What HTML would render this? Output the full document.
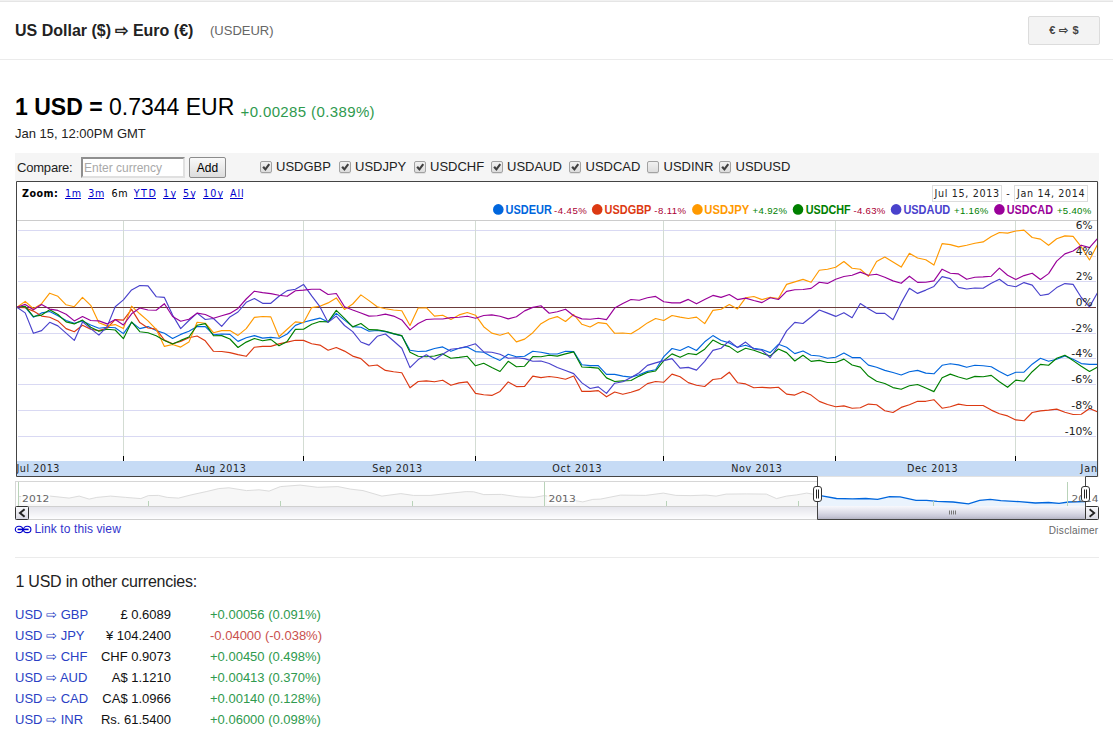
<!DOCTYPE html>
<html>
<head>
<meta charset="utf-8">
<title>US Dollar to Euro</title>
<style>
html,body{margin:0;padding:0;background:#fff;}
body{width:1113px;height:743px;position:relative;overflow:hidden;font-family:"Liberation Sans",Arial,sans-serif;color:#222;}
.abs{position:absolute;white-space:nowrap;}
#topline{left:0;top:0;width:1113px;height:1px;background:#f1f1f1;border-bottom:1px solid #e5e5e5;}
#hdrline{left:0;top:59px;width:1113px;height:1px;background:#ebebeb;}
#title{left:15px;top:22px;font-size:16px;font-weight:bold;line-height:18px;color:#222;}
#sym{left:210px;top:23px;font-size:13px;line-height:15px;color:#666;}
#swap{left:1028px;top:16px;width:70px;height:27px;border:1px solid #dcdcdc;background:#f3f3f3;border-radius:2px;text-align:center;font-size:11px;font-weight:bold;line-height:27px;color:#444;word-spacing:1px;}
#price{left:15px;top:94px;font-size:23px;line-height:26px;color:#000;}
#price b{font-weight:bold;}
#chg{left:240.5px;top:103px;font-size:15px;line-height:18px;color:#2f9a4e;letter-spacing:0.38px;}
#date{left:15px;top:126px;font-size:13px;line-height:15px;color:#222;}
#cmpbar{left:15px;top:153px;width:1084px;height:28px;background:#f5f5f5;}
#cmplbl{left:17px;top:160px;font-size:13px;line-height:15px;color:#222;letter-spacing:-0.2px;}
#cmpin{left:81px;top:157px;width:100px;height:17px;border:2px solid;border-color:#8f8f8f #e0e0e0 #e0e0e0 #8f8f8f;background:#fff;font-size:12px;line-height:18px;color:#a9a9a9;padding-left:1px;width:99px;}
#cmpadd{left:189px;top:157px;width:35px;height:19px;border:1px solid #8c8c8c;border-radius:2px;background:linear-gradient(#f9f9f9,#dddddd);font-size:12px;line-height:20.5px;text-align:center;color:#000;}
.cb{width:10px;height:10px;border:1px solid #a2a2a2;border-radius:2px;background:linear-gradient(#f1f1f1,#dddddd);top:161px;box-shadow:0 1px 0 rgba(0,0,0,0.08);}
.cb svg{position:absolute;left:0;top:0;}
.cbl{top:159px;font-size:13px;line-height:15px;color:#222;}
#chart{left:16px;top:181px;}
.lnk{color:#1a0dab;}
#linkview{left:34.5px;top:522px;font-size:12px;line-height:14px;color:#3333cc;letter-spacing:0.1px;}
#discl{right:14.5px;top:525px;font-size:10px;line-height:12px;color:#666;letter-spacing:0.3px;}
#sep2{left:15px;top:557px;width:1084px;height:1px;background:#ebebeb;}
#other{left:15.5px;top:573px;font-size:16px;line-height:18px;color:#222;letter-spacing:-0.24px;}
.row{font-size:13px;line-height:16px;}
.c1{left:15px;color:#2a3fc4;}
.c2{right:942px;color:#111;}
.c3{left:210px;}
.up{color:#2f9a4e;}
.dn{color:#c9504d;}
</style>
</head>
<body>
<div class="abs" id="topline"></div>
<div class="abs" id="title">US Dollar ($) &#8680; Euro (&euro;)</div>
<div class="abs" id="sym">(USDEUR)</div>
<div class="abs" id="swap">&euro; &#8680; $</div>
<div class="abs" id="hdrline"></div>

<div class="abs" id="price"><b>1 USD =</b> 0.7344 EUR</div>
<div class="abs" id="chg">+0.00285 (0.389%)</div>
<div class="abs" id="date">Jan 15, 12:00PM GMT</div>

<div class="abs" id="cmpbar"></div>
<div class="abs" id="cmplbl">Compare:</div>
<div class="abs" id="cmpin">Enter currency</div>
<div class="abs" id="cmpadd">Add</div>

<div class="abs cb" style="left:260px"><svg width="10" height="10" viewBox="0 0 10 10"><path d="M1.3 5.6 L3.0 4.1 L4.3 5.7 L7.4 1.4 L9.1 2.7 L4.5 9 Z" fill="#3f3f3f"/></svg></div><div class="abs cbl" style="left:276px">USDGBP</div>
<div class="abs cb" style="left:339px"><svg width="10" height="10" viewBox="0 0 10 10"><path d="M1.3 5.6 L3.0 4.1 L4.3 5.7 L7.4 1.4 L9.1 2.7 L4.5 9 Z" fill="#3f3f3f"/></svg></div><div class="abs cbl" style="left:355px">USDJPY</div>
<div class="abs cb" style="left:414px"><svg width="10" height="10" viewBox="0 0 10 10"><path d="M1.3 5.6 L3.0 4.1 L4.3 5.7 L7.4 1.4 L9.1 2.7 L4.5 9 Z" fill="#3f3f3f"/></svg></div><div class="abs cbl" style="left:430px">USDCHF</div>
<div class="abs cb" style="left:491px"><svg width="10" height="10" viewBox="0 0 10 10"><path d="M1.3 5.6 L3.0 4.1 L4.3 5.7 L7.4 1.4 L9.1 2.7 L4.5 9 Z" fill="#3f3f3f"/></svg></div><div class="abs cbl" style="left:507px">USDAUD</div>
<div class="abs cb" style="left:569px"><svg width="10" height="10" viewBox="0 0 10 10"><path d="M1.3 5.6 L3.0 4.1 L4.3 5.7 L7.4 1.4 L9.1 2.7 L4.5 9 Z" fill="#3f3f3f"/></svg></div><div class="abs cbl" style="left:585.5px">USDCAD</div>
<div class="abs cb" style="left:647px"></div><div class="abs cbl" style="left:663.5px">USDINR</div>
<div class="abs cb" style="left:719px"><svg width="10" height="10" viewBox="0 0 10 10"><path d="M1.3 5.6 L3.0 4.1 L4.3 5.7 L7.4 1.4 L9.1 2.7 L4.5 9 Z" fill="#3f3f3f"/></svg></div><div class="abs cbl" style="left:735.5px">USDUSD</div>

<svg class="abs" id="chart" width="1113" height="345" viewBox="0 180 1113 345" style="left:0;top:180px;">
<defs>
<clipPath id="plotclip"><rect x="17" y="182" width="1080" height="294"/></clipPath>
<linearGradient id="trk" x1="0" y1="0" x2="0" y2="1"><stop offset="0" stop-color="#e3e3ea"/><stop offset="1" stop-color="#fdfdfe"/></linearGradient>
<linearGradient id="thumb" x1="0" y1="0" x2="0" y2="1"><stop offset="0" stop-color="#f8f8fc"/><stop offset="0.5" stop-color="#dcdce8"/><stop offset="0.8" stop-color="#c8c8d8"/><stop offset="1" stop-color="#b4b4c4"/></linearGradient>
<linearGradient id="btn" x1="0" y1="0" x2="0" y2="1"><stop offset="0" stop-color="#fafafc"/><stop offset="1" stop-color="#d8d8e2"/></linearGradient>
</defs>
<rect x="16" y="181" width="1082" height="296" fill="#fff"/>
<rect x="17" y="220" width="1080" height="1" fill="#cccccc"/>
<line x1="18" x2="1096" y1="230.5" y2="230.5" stroke="#d9d9f3" stroke-width="1"/>
<line x1="18" x2="1096" y1="256.5" y2="256.5" stroke="#d9d9f3" stroke-width="1"/>
<line x1="18" x2="1096" y1="281.5" y2="281.5" stroke="#d9d9f3" stroke-width="1"/>
<line x1="18" x2="1096" y1="333.5" y2="333.5" stroke="#d9d9f3" stroke-width="1"/>
<line x1="18" x2="1096" y1="358.5" y2="358.5" stroke="#d9d9f3" stroke-width="1"/>
<line x1="18" x2="1096" y1="384.5" y2="384.5" stroke="#d9d9f3" stroke-width="1"/>
<line x1="18" x2="1096" y1="410.5" y2="410.5" stroke="#d9d9f3" stroke-width="1"/>
<line x1="18" x2="1096" y1="436.5" y2="436.5" stroke="#d9d9f3" stroke-width="1"/>
<line x1="123.5" x2="123.5" y1="221" y2="456" stroke="#d3dcd3" stroke-width="1"/>
<line x1="123.5" x2="123.5" y1="456" y2="461" stroke="#000" stroke-width="1"/>
<line x1="303.5" x2="303.5" y1="221" y2="456" stroke="#d3dcd3" stroke-width="1"/>
<line x1="303.5" x2="303.5" y1="456" y2="461" stroke="#000" stroke-width="1"/>
<line x1="475.5" x2="475.5" y1="221" y2="456" stroke="#d3dcd3" stroke-width="1"/>
<line x1="475.5" x2="475.5" y1="456" y2="461" stroke="#000" stroke-width="1"/>
<line x1="663.5" x2="663.5" y1="221" y2="456" stroke="#d3dcd3" stroke-width="1"/>
<line x1="663.5" x2="663.5" y1="456" y2="461" stroke="#000" stroke-width="1"/>
<line x1="835.5" x2="835.5" y1="221" y2="456" stroke="#d3dcd3" stroke-width="1"/>
<line x1="835.5" x2="835.5" y1="456" y2="461" stroke="#000" stroke-width="1"/>
<line x1="1015.5" x2="1015.5" y1="221" y2="456" stroke="#d3dcd3" stroke-width="1"/>
<line x1="1015.5" x2="1015.5" y1="456" y2="461" stroke="#000" stroke-width="1"/>
<line x1="17" x2="1096" y1="307.5" y2="307.5" stroke="#6b3b3b" stroke-width="1.1"/>
<rect x="17" y="461" width="1080" height="15" fill="#c6dbf5"/>
<g clip-path="url(#plotclip)" fill="none" stroke-width="1.15" stroke-linejoin="round">
<polyline points="17.0,307.3 25.2,307.1 33.4,317.2 41.6,312.9 49.7,311.5 57.9,315.8 66.1,320.5 74.3,323.2 82.5,320.9 90.7,325.0 98.9,328.2 107.1,327.3 115.2,327.7 123.4,333.6 131.6,322.3 139.8,328.6 148.0,326.6 156.2,330.6 164.4,333.3 172.6,338.5 180.7,334.4 188.9,331.3 197.1,326.6 205.3,326.6 213.5,334.7 221.7,334.0 229.9,334.4 238.0,341.4 246.2,337.8 254.4,335.6 262.6,338.1 270.8,337.4 279.0,338.3 287.2,334.0 295.4,325.4 303.5,322.2 311.7,320.1 319.9,318.1 328.1,321.9 336.3,313.4 344.5,320.1 352.7,326.6 360.9,327.3 369.0,331.2 377.2,330.5 385.4,331.6 393.6,333.9 401.8,335.9 410.0,350.2 418.2,351.5 426.3,351.1 434.5,348.5 442.7,346.9 450.9,351.3 459.1,348.2 467.3,346.9 475.5,351.6 483.7,352.3 491.8,356.7 500.0,360.4 508.2,354.3 516.4,356.7 524.6,356.3 532.8,351.3 541.0,352.3 549.2,353.9 557.3,354.0 565.5,351.3 573.7,351.6 581.9,364.7 590.1,365.6 598.3,365.6 606.5,374.4 614.7,374.4 622.8,376.1 631.0,377.1 639.2,374.8 647.4,371.4 655.6,369.8 663.8,356.6 672.0,348.5 680.1,350.5 688.3,346.5 696.5,350.5 704.7,341.8 712.9,335.6 721.1,340.5 729.3,342.9 737.5,347.2 745.6,345.2 753.8,348.2 762.0,349.5 770.2,352.6 778.4,344.3 786.6,347.2 794.8,353.6 803.0,351.0 811.1,355.3 819.3,356.0 827.5,358.3 835.7,357.3 843.9,353.0 852.1,357.6 860.3,357.6 868.4,365.1 876.6,367.3 884.8,370.4 893.0,372.5 901.2,375.0 909.4,371.7 917.6,370.4 925.8,373.1 933.9,373.8 942.1,365.3 950.3,363.7 958.5,364.9 966.7,367.3 974.9,365.3 983.1,365.7 991.3,366.7 999.4,371.4 1007.6,375.8 1015.8,372.3 1024.0,372.1 1032.2,364.2 1040.4,358.3 1048.6,361.3 1056.7,359.3 1064.9,355.9 1073.1,359.3 1081.3,363.6 1089.5,364.4 1097.7,364.4" stroke="#0066dd"/>
<polyline points="17.0,307.3 25.2,307.7 33.4,311.1 41.6,316.1 49.7,317.2 57.9,320.9 66.1,328.6 74.3,331.7 82.5,325.3 90.7,329.3 98.9,330.6 107.1,328.0 115.2,319.6 123.4,320.1 131.6,309.4 139.8,322.6 148.0,328.0 156.2,329.1 164.4,340.1 172.6,343.7 180.7,341.4 188.9,337.8 197.1,336.0 205.3,340.8 213.5,351.3 221.7,351.5 229.9,352.6 238.0,354.6 246.2,356.3 254.4,347.2 262.6,346.4 270.8,346.4 279.0,343.9 287.2,342.1 295.4,340.2 303.5,340.4 311.7,343.7 319.9,345.1 328.1,350.2 336.3,347.5 344.5,351.1 352.7,356.1 360.9,358.6 369.0,366.0 377.2,365.0 385.4,370.4 393.6,371.8 401.8,372.7 410.0,387.8 418.2,381.5 426.3,380.9 434.5,381.8 442.7,380.2 450.9,385.3 459.1,382.9 467.3,381.9 475.5,393.4 483.7,394.7 491.8,395.4 500.0,391.4 508.2,381.9 516.4,386.6 524.6,386.4 532.8,376.1 541.0,377.6 549.2,376.5 557.3,377.5 565.5,379.2 573.7,376.0 581.9,391.4 590.1,391.4 598.3,390.6 606.5,396.8 614.7,392.0 622.8,394.3 631.0,392.3 639.2,389.6 647.4,383.6 655.6,381.5 663.8,382.2 672.0,374.1 680.1,376.8 688.3,382.6 696.5,385.2 704.7,386.5 712.9,379.5 721.1,378.5 729.3,372.2 737.5,382.7 745.6,383.9 753.8,387.7 762.0,387.3 770.2,387.9 778.4,387.3 786.6,394.1 794.8,395.1 803.0,391.4 811.1,395.1 819.3,401.4 827.5,404.5 835.7,406.8 843.9,405.9 852.1,408.3 860.3,407.8 868.4,404.1 876.6,404.8 884.8,410.7 893.0,412.5 901.2,407.4 909.4,404.7 917.6,401.3 925.8,401.3 933.9,399.7 942.1,408.2 950.3,406.7 958.5,404.1 966.7,405.5 974.9,405.5 983.1,405.5 991.3,410.1 999.4,413.7 1007.6,415.9 1015.8,419.9 1024.0,420.8 1032.2,412.5 1040.4,410.9 1048.6,410.1 1056.7,409.1 1064.9,412.2 1073.1,414.5 1081.3,414.2 1089.5,408.5 1097.7,411.8" stroke="#dc3912"/>
<polyline points="17.0,307.3 25.2,301.4 33.4,308.8 41.6,303.7 49.7,293.2 57.9,296.3 66.1,304.8 74.3,306.7 82.5,297.4 90.7,305.3 98.9,322.8 107.1,325.9 115.2,324.6 123.4,328.6 131.6,306.1 139.8,313.8 148.0,320.9 156.2,329.3 164.4,346.4 172.6,344.5 180.7,347.1 188.9,342.1 197.1,322.3 205.3,323.2 213.5,332.7 221.7,330.6 229.9,330.6 238.0,335.4 246.2,328.6 254.4,317.4 262.6,316.5 270.8,316.9 279.0,336.7 287.2,329.3 295.4,321.9 303.5,322.8 311.7,307.6 319.9,306.3 328.1,302.9 336.3,297.9 344.5,309.4 352.7,304.0 360.9,294.9 369.0,300.6 377.2,306.7 385.4,308.7 393.6,310.0 401.8,310.7 410.0,325.5 418.2,308.0 426.3,307.7 434.5,316.1 442.7,315.2 450.9,319.5 459.1,314.9 467.3,312.5 475.5,315.2 483.7,326.7 491.8,333.1 500.0,335.2 508.2,332.7 516.4,341.9 524.6,339.1 532.8,332.7 541.0,323.7 549.2,319.0 557.3,316.6 565.5,321.5 573.7,314.5 581.9,324.3 590.1,327.0 598.3,322.6 606.5,323.6 614.7,333.3 622.8,333.0 631.0,333.7 639.2,328.7 647.4,322.9 655.6,318.5 663.8,320.5 672.0,315.5 680.1,317.1 688.3,318.5 696.5,317.1 704.7,323.6 712.9,310.4 721.1,309.3 729.3,304.6 737.5,308.9 745.6,297.8 753.8,296.5 762.0,299.6 770.2,297.2 778.4,298.5 786.6,284.4 794.8,281.9 803.0,279.4 811.1,282.3 819.3,270.2 827.5,269.3 835.7,267.3 843.9,261.5 852.1,268.3 860.3,269.2 868.4,276.3 876.6,261.5 884.8,257.0 893.0,262.0 901.2,267.1 909.4,253.3 917.6,258.0 925.8,259.7 933.9,265.1 942.1,243.6 950.3,244.6 958.5,246.9 966.7,245.2 974.9,243.3 983.1,241.9 991.3,236.6 999.4,232.5 1007.6,233.1 1015.8,231.0 1024.0,230.1 1032.2,237.5 1040.4,239.1 1048.6,245.3 1056.7,238.8 1064.9,235.9 1073.1,236.4 1081.3,246.9 1089.5,260.0 1097.7,244.2" stroke="#ff9900"/>
<polyline points="17.0,307.3 25.2,306.4 33.4,316.5 41.6,315.1 49.7,309.8 57.9,314.5 66.1,321.9 74.3,323.9 82.5,320.1 90.7,327.3 98.9,331.3 107.1,329.3 115.2,330.0 123.4,338.7 131.6,321.9 139.8,331.7 148.0,332.7 156.2,335.8 164.4,340.4 172.6,344.1 180.7,340.4 188.9,337.0 197.1,325.3 205.3,323.6 213.5,335.8 221.7,335.6 229.9,339.0 238.0,347.5 246.2,342.1 254.4,338.5 262.6,340.8 270.8,339.4 279.0,345.7 287.2,341.4 295.4,329.4 303.5,329.3 311.7,324.2 319.9,321.5 328.1,321.9 336.3,310.3 344.5,318.4 352.7,326.9 360.9,323.5 369.0,329.6 377.2,329.9 385.4,331.3 393.6,333.6 401.8,335.6 410.0,352.2 418.2,356.3 426.3,356.8 434.5,356.0 442.7,353.9 450.9,358.3 459.1,357.4 467.3,356.3 475.5,365.8 483.7,363.3 491.8,367.5 500.0,371.5 508.2,361.3 516.4,366.8 524.6,366.2 532.8,356.6 541.0,356.7 549.2,355.2 557.3,356.1 565.5,353.9 573.7,351.9 581.9,367.0 590.1,367.4 598.3,368.1 606.5,377.9 614.7,381.5 622.8,380.9 631.0,380.5 639.2,376.1 647.4,372.5 655.6,371.0 663.8,360.6 672.0,353.9 680.1,357.3 688.3,353.5 696.5,354.6 704.7,349.2 712.9,340.1 721.1,344.3 729.3,346.6 737.5,352.4 745.6,348.3 753.8,350.2 762.0,353.3 770.2,356.0 778.4,349.0 786.6,352.6 794.8,361.0 803.0,355.3 811.1,361.4 819.3,360.4 827.5,362.5 835.7,362.5 843.9,359.1 852.1,365.0 860.3,367.1 868.4,376.1 876.6,381.2 884.8,383.5 893.0,387.6 901.2,389.3 909.4,385.8 917.6,384.5 925.8,388.0 933.9,391.6 942.1,377.7 950.3,374.1 958.5,377.0 966.7,379.2 974.9,376.4 983.1,376.8 991.3,375.4 999.4,381.8 1007.6,387.3 1015.8,380.1 1024.0,381.2 1032.2,371.7 1040.4,364.4 1048.6,365.3 1056.7,358.3 1064.9,355.2 1073.1,360.6 1081.3,366.3 1089.5,371.4 1097.7,366.9" stroke="#008000"/>
<polyline points="17.0,307.3 25.2,312.9 33.4,333.3 41.6,330.6 49.7,322.3 57.9,325.9 66.1,333.1 74.3,340.4 82.5,321.9 90.7,328.6 98.9,335.1 107.1,326.6 115.2,306.7 123.4,299.9 131.6,289.9 139.8,285.5 148.0,285.9 156.2,296.7 164.4,297.4 172.6,315.1 180.7,328.6 188.9,320.5 197.1,313.1 205.3,319.5 213.5,318.5 221.7,326.3 229.9,316.9 238.0,312.0 246.2,302.3 254.4,298.6 262.6,303.3 270.8,303.3 279.0,296.3 287.2,290.6 295.4,289.2 303.5,284.4 311.7,295.9 319.9,306.7 328.1,322.4 336.3,316.1 344.5,325.5 352.7,331.6 360.9,342.0 369.0,345.1 377.2,336.3 385.4,334.0 393.6,341.0 401.8,348.2 410.0,367.6 418.2,359.6 426.3,354.8 434.5,359.7 442.7,354.3 450.9,349.3 459.1,348.2 467.3,346.2 475.5,343.8 483.7,351.9 491.8,352.3 500.0,354.3 508.2,358.3 516.4,357.7 524.6,358.6 532.8,361.3 541.0,361.0 549.2,363.5 557.3,367.5 565.5,370.5 573.7,373.6 581.9,382.9 590.1,388.5 598.3,386.9 606.5,393.4 614.7,383.2 622.8,381.8 631.0,377.5 639.2,372.8 647.4,365.4 655.6,362.9 663.8,360.6 672.0,358.6 680.1,368.1 688.3,367.4 696.5,370.1 704.7,361.3 712.9,350.4 721.1,348.3 729.3,340.9 737.5,347.6 745.6,342.1 753.8,349.0 762.0,350.3 770.2,357.7 778.4,345.2 786.6,330.9 794.8,322.4 803.0,323.5 811.1,317.0 819.3,310.0 827.5,313.1 835.7,316.4 843.9,312.7 852.1,317.7 860.3,303.5 868.4,308.7 876.6,313.4 884.8,313.4 893.0,319.7 901.2,302.9 909.4,288.3 917.6,293.4 925.8,290.1 933.9,286.4 942.1,276.6 950.3,278.6 958.5,287.4 966.7,289.0 974.9,288.0 983.1,288.3 991.3,283.3 999.4,279.3 1007.6,285.3 1015.8,286.7 1024.0,282.6 1032.2,285.1 1040.4,295.5 1048.6,294.1 1056.7,287.6 1064.9,283.6 1073.1,284.4 1081.3,297.5 1089.5,306.9 1097.7,292.4" stroke="#4942cc"/>
<polyline points="17.0,307.3 25.2,304.4 33.4,309.8 41.6,304.4 49.7,309.1 57.9,310.4 66.1,314.2 74.3,320.9 82.5,316.5 90.7,320.5 98.9,320.9 107.1,323.9 115.2,319.6 123.4,325.0 131.6,313.8 139.8,308.0 148.0,310.0 156.2,310.2 164.4,303.7 172.6,316.5 180.7,321.2 188.9,319.2 197.1,313.1 205.3,314.5 213.5,318.2 221.7,315.8 229.9,313.4 238.0,308.4 246.2,299.0 254.4,291.2 262.6,292.6 270.8,293.6 279.0,295.3 287.2,296.3 295.4,290.7 303.5,290.1 311.7,289.2 319.9,289.2 328.1,294.5 336.3,293.5 344.5,306.7 352.7,310.0 360.9,313.0 369.0,316.1 377.2,315.7 385.4,314.1 393.6,316.1 401.8,319.9 410.0,329.9 418.2,323.5 426.3,319.5 434.5,319.0 442.7,319.0 450.9,317.6 459.1,317.2 467.3,316.3 475.5,318.3 483.7,315.5 491.8,314.9 500.0,316.2 508.2,318.9 516.4,316.8 524.6,310.9 532.8,307.4 541.0,305.8 549.2,313.2 557.3,311.8 565.5,309.2 573.7,315.7 581.9,318.9 590.1,319.3 598.3,318.2 606.5,319.6 614.7,308.1 622.8,303.4 631.0,299.5 639.2,300.2 647.4,297.7 655.6,296.4 663.8,301.8 672.0,302.9 680.1,302.9 688.3,299.4 696.5,303.8 704.7,299.5 712.9,295.4 721.1,297.4 729.3,294.5 737.5,299.6 745.6,298.1 753.8,300.5 762.0,302.6 770.2,297.8 778.4,299.5 786.6,291.4 794.8,289.8 803.0,289.5 811.1,288.4 819.3,282.3 827.5,283.4 835.7,279.2 843.9,276.5 852.1,275.2 860.3,272.1 868.4,275.2 876.6,274.2 884.8,277.3 893.0,280.9 901.2,283.3 909.4,276.2 917.6,282.4 925.8,282.2 933.9,280.9 942.1,269.2 950.3,273.2 958.5,273.9 966.7,279.3 974.9,277.3 983.1,276.9 991.3,276.2 999.4,268.1 1007.6,275.2 1015.8,279.5 1024.0,275.6 1032.2,273.2 1040.4,279.5 1048.6,273.6 1056.7,261.1 1064.9,253.9 1073.1,251.0 1081.3,245.2 1089.5,247.6 1097.7,238.2" stroke="#990099"/>
</g>
<g font-family="'DejaVu Sans',Verdana,sans-serif" font-size="9.6" fill="#222" text-anchor="end">
<text x="1092.6" y="229.0" textLength="16.8" lengthAdjust="spacingAndGlyphs">6%</text>
<text x="1092.6" y="255.0" textLength="16.8" lengthAdjust="spacingAndGlyphs">4%</text>
<text x="1092.6" y="280.0" textLength="16.8" lengthAdjust="spacingAndGlyphs">2%</text>
<text x="1092.6" y="306.0" textLength="16.8" lengthAdjust="spacingAndGlyphs">0%</text>
<text x="1092.6" y="332.0" textLength="21.4" lengthAdjust="spacingAndGlyphs">-2%</text>
<text x="1092.6" y="357.0" textLength="21.4" lengthAdjust="spacingAndGlyphs">-4%</text>
<text x="1092.6" y="383.0" textLength="21.4" lengthAdjust="spacingAndGlyphs">-6%</text>
<text x="1092.6" y="409.0" textLength="21.4" lengthAdjust="spacingAndGlyphs">-8%</text>
<text x="1092.6" y="435.0" textLength="27.8" lengthAdjust="spacingAndGlyphs">-10%</text>
</g>
<g clip-path="url(#plotclip)" font-family="'DejaVu Sans',Verdana,sans-serif" font-size="9.6" fill="#222">
<text x="16.4" y="472" textLength="43.0" lengthAdjust="spacing">Jul 2013</text>
<text x="195.2" y="472" textLength="50.6" lengthAdjust="spacing">Aug 2013</text>
<text x="372.3" y="472" textLength="49.8" lengthAdjust="spacing">Sep 2013</text>
<text x="552.3" y="472" textLength="49.3" lengthAdjust="spacing">Oct 2013</text>
<text x="731.3" y="472" textLength="50.6" lengthAdjust="spacing">Nov 2013</text>
<text x="907.0" y="472" textLength="50.6" lengthAdjust="spacing">Dec 2013</text>
<text x="1080.6" y="472" textLength="48.0" lengthAdjust="spacing">Jan 2014</text>
</g>
<g font-family="'DejaVu Sans',Verdana,sans-serif" font-size="9.6">
<text x="22" y="196.5" font-weight="bold" fill="#000" textLength="35.8" lengthAdjust="spacing">Zoom:</text>
<text x="65.0" y="196.5" fill="#0000cc" textLength="16.1" lengthAdjust="spacing">1m</text>
<rect x="65.0" y="198" width="16.0" height="1" fill="#0000cc"/>
<text x="88.2" y="196.5" fill="#0000cc" textLength="16.1" lengthAdjust="spacing">3m</text>
<rect x="88.0" y="198" width="16.0" height="1" fill="#0000cc"/>
<text x="111.6" y="196.5" fill="#000" textLength="16.1" lengthAdjust="spacing">6m</text>
<text x="133.7" y="196.5" fill="#0000cc" textLength="22.2" lengthAdjust="spacing">YTD</text>
<rect x="134.0" y="198" width="22.0" height="1" fill="#0000cc"/>
<text x="163.0" y="196.5" fill="#0000cc" textLength="13.3" lengthAdjust="spacing">1y</text>
<rect x="163.0" y="198" width="13.0" height="1" fill="#0000cc"/>
<text x="183.0" y="196.5" fill="#0000cc" textLength="13.0" lengthAdjust="spacing">5y</text>
<rect x="183.0" y="198" width="12.0" height="1" fill="#0000cc"/>
<text x="203.0" y="196.5" fill="#0000cc" textLength="20.2" lengthAdjust="spacing">10y</text>
<rect x="203.0" y="198" width="20.0" height="1" fill="#0000cc"/>
<text x="230.0" y="196.5" fill="#0000cc" textLength="13.6" lengthAdjust="spacing">All</text>
<rect x="230.0" y="198" width="13.0" height="1" fill="#0000cc"/>
</g>
<rect x="932.5" y="185.5" width="69" height="16" fill="#fff" stroke="#dddddd"/>
<rect x="1014.5" y="185.5" width="73" height="16" fill="#fff" stroke="#dddddd"/>
<g font-family="'DejaVu Sans',Verdana,sans-serif" font-size="9.6" fill="#222">
<text x="934.5" y="197" textLength="64.5" lengthAdjust="spacing">Jul 15, 2013</text><text x="1006.3" y="197">-</text><text x="1017" y="197" textLength="67.6" lengthAdjust="spacing">Jan 14, 2014</text>
</g>
<g font-family="'Liberation Sans',Arial,sans-serif">
<circle cx="498.3" cy="209.4" r="5.3" fill="#0066dd"/>
<text x="505.5" y="214" font-size="12" font-weight="bold" fill="#0066dd" textLength="46.3" lengthAdjust="spacingAndGlyphs">USDEUR</text>
<text x="554.1" y="214" font-size="9.6" fill="#aa0033" textLength="32.6" lengthAdjust="spacing">-4.45%</text>
<circle cx="597.2" cy="209.4" r="5.3" fill="#dc3912"/>
<text x="604.6" y="214" font-size="12" font-weight="bold" fill="#dc3912" textLength="46.8" lengthAdjust="spacingAndGlyphs">USDGBP</text>
<text x="654.3" y="214" font-size="9.6" fill="#aa0033" textLength="31.8" lengthAdjust="spacing">-8.11%</text>
<circle cx="697.4" cy="209.4" r="5.3" fill="#ff9900"/>
<text x="704.3" y="214" font-size="12" font-weight="bold" fill="#ff9900" textLength="45.0" lengthAdjust="spacingAndGlyphs">USDJPY</text>
<text x="752.6" y="214" font-size="9.6" fill="#008000" textLength="34.4" lengthAdjust="spacing">+4.92%</text>
<circle cx="798.0" cy="209.4" r="5.3" fill="#008000"/>
<text x="805.7" y="214" font-size="12" font-weight="bold" fill="#008000" textLength="45.0" lengthAdjust="spacingAndGlyphs">USDCHF</text>
<text x="853.4" y="214" font-size="9.6" fill="#aa0033" textLength="31.9" lengthAdjust="spacing">-4.63%</text>
<circle cx="896.1" cy="209.4" r="5.3" fill="#4942cc"/>
<text x="903.4" y="214" font-size="12" font-weight="bold" fill="#4942cc" textLength="46.9" lengthAdjust="spacingAndGlyphs">USDAUD</text>
<text x="954.0" y="214" font-size="9.6" fill="#008000" textLength="34.3" lengthAdjust="spacing">+1.16%</text>
<circle cx="999.4" cy="209.4" r="5.3" fill="#990099"/>
<text x="1006.7" y="214" font-size="12" font-weight="bold" fill="#990099" textLength="46.3" lengthAdjust="spacingAndGlyphs">USDCAD</text>
<text x="1056.9" y="214" font-size="9.6" fill="#008000" textLength="34.4" lengthAdjust="spacing">+5.40%</text>
</g>
<rect x="15.5" y="481.5" width="802" height="38" fill="#fff" stroke="#d6d6d6"/>
<polygon points="17,506 18.8,496.5 50.3,496.1 69.1,498.1 79.2,496.1 89.2,499.1 96.8,497.4 110.6,496.1 125.7,497.4 140.8,498.6 148.4,495.6 158.4,495.4 167.2,497.4 178.6,498.1 191.1,494.9 206.2,491.6 218.8,488.6 228.9,487.8 246.5,490.6 259.1,489.8 269.1,491.1 280.4,486.6 300.1,485.1 317.7,487.3 337.9,486.6 350.4,489.1 363.0,490.6 381.9,496.1 400.8,493.6 413.3,495.4 430.9,495.4 451.1,493.1 466.2,491.6 473.7,491.8 483.8,494.6 501.4,494.4 519.0,496.9 534.1,497.4 544.2,495.6 560.0,498.0 575.2,500.7 582.8,501.9 592.8,499.4 600.4,499.1 620.5,495.1 645.7,495.4 663.3,493.1 675.8,495.4 690.9,495.6 706.0,495.1 716.1,496.1 726.2,494.1 746.3,493.9 766.4,494.1 776.5,498.6 786.5,496.1 796.6,494.9 806.7,493.1 817.0,494.8 817,506" fill="#f7f7f7"/>
<polyline points="18.8,496.5 50.3,496.1 69.1,498.1 79.2,496.1 89.2,499.1 96.8,497.4 110.6,496.1 125.7,497.4 140.8,498.6 148.4,495.6 158.4,495.4 167.2,497.4 178.6,498.1 191.1,494.9 206.2,491.6 218.8,488.6 228.9,487.8 246.5,490.6 259.1,489.8 269.1,491.1 280.4,486.6 300.1,485.1 317.7,487.3 337.9,486.6 350.4,489.1 363.0,490.6 381.9,496.1 400.8,493.6 413.3,495.4 430.9,495.4 451.1,493.1 466.2,491.6 473.7,491.8 483.8,494.6 501.4,494.4 519.0,496.9 534.1,497.4 544.2,495.6 560.0,498.0 575.2,500.7 582.8,501.9 592.8,499.4 600.4,499.1 620.5,495.1 645.7,495.4 663.3,493.1 675.8,495.4 690.9,495.6 706.0,495.1 716.1,496.1 726.2,494.1 746.3,493.9 766.4,494.1 776.5,498.6 786.5,496.1 796.6,494.9 806.7,493.1 817.0,494.8" fill="none" stroke="#dcdcdc" stroke-width="1"/>
<rect x="818" y="477" width="267" height="29" fill="#fff"/>
<rect x="818" y="476" width="267" height="1" fill="#e2e2e2"/>
<polygon points="818,506 818.0,495.2 821.9,495.9 836.5,498.5 852.4,498.8 865.7,498.5 877.6,499.3 889.5,496.7 900.1,496.9 916.0,500.4 926.6,500.4 937.2,501.4 953.1,502.0 968.5,503.8 979.6,500.4 990.2,499.3 1000.8,500.6 1019.4,501.7 1035.3,503.0 1048.5,502.5 1059.1,503.3 1068.4,502.0 1085.0,501.5 1085,506" fill="#eaf3fd"/>
<polyline points="818.0,495.2 821.9,495.9 836.5,498.5 852.4,498.8 865.7,498.5 877.6,499.3 889.5,496.7 900.1,496.9 916.0,500.4 926.6,500.4 937.2,501.4 953.1,502.0 968.5,503.8 979.6,500.4 990.2,499.3 1000.8,500.6 1019.4,501.7 1035.3,503.0 1048.5,502.5 1059.1,503.3 1068.4,502.0 1085.0,501.5" fill="none" stroke="#0066dd" stroke-width="1.3"/>
<line x1="18.5" x2="18.5" y1="482" y2="506" stroke="#b9d3b9" stroke-width="1"/>
<line x1="544.5" x2="544.5" y1="482" y2="506" stroke="#b9d3b9" stroke-width="1"/>
<line x1="1067.5" x2="1067.5" y1="482" y2="506" stroke="#b9d3b9" stroke-width="1"/>
<line x1="148.5" x2="148.5" y1="501" y2="506" stroke="#b9d3b9" stroke-width="1"/>
<line x1="280.5" x2="280.5" y1="501" y2="506" stroke="#b9d3b9" stroke-width="1"/>
<line x1="412.5" x2="412.5" y1="501" y2="506" stroke="#b9d3b9" stroke-width="1"/>
<line x1="666.5" x2="666.5" y1="501" y2="506" stroke="#b9d3b9" stroke-width="1"/>
<line x1="798.5" x2="798.5" y1="501" y2="506" stroke="#b9d3b9" stroke-width="1"/>
<line x1="933.5" x2="933.5" y1="501" y2="506" stroke="#b9d3b9" stroke-width="1"/>
<g font-family="'DejaVu Sans',Verdana,sans-serif" font-size="10" fill="#666">
<rect x="21" y="494" width="29" height="10" fill="#fff" opacity="0.7"/><rect x="547" y="494" width="29" height="10" fill="#fff" opacity="0.7"/>
<text transform="translate(22.1,502.3) scale(1.07,0.9)" x="0" y="0">2012</text>
<text transform="translate(548.5,502.3) scale(1.07,0.9)" x="0" y="0">2013</text>
<text transform="translate(1071.4,502.3) scale(1.07,0.9)" x="0" y="0">2014</text>
</g>
<rect x="17" y="506" width="1081" height="13" fill="url(#trk)"/>
<line x1="17" x2="817" y1="506.5" y2="506.5" stroke="#d0d0d0"/>
<line x1="16" x2="1098" y1="519.5" y2="519.5" stroke="#cfcfcf"/>
<rect x="818" y="506" width="267" height="13" fill="url(#thumb)"/>
<line x1="949.5" x2="949.5" y1="510.5" y2="514.5" stroke="#777" stroke-width="1"/>
<line x1="951.5" x2="951.5" y1="510.5" y2="514.5" stroke="#777" stroke-width="1"/>
<line x1="953.5" x2="953.5" y1="510.5" y2="514.5" stroke="#777" stroke-width="1"/>
<line x1="955.5" x2="955.5" y1="510.5" y2="514.5" stroke="#777" stroke-width="1"/>
<path d="M16.5 181.5H1097.5V476.5H1085.5V519.5H817.5V476.5H16.5Z" fill="none" stroke="#444" stroke-width="1"/>
<line x1="1098.5" x2="1098.5" y1="182" y2="477" stroke="#eee"/>
<rect x="15.5" y="506.5" width="13" height="13" rx="1" fill="url(#btn)" stroke="#333"/>
<path d="M24.6 509.2 L20 513 L24.6 516.8" fill="none" stroke="#222" stroke-width="2"/>
<rect x="1085.5" y="506.5" width="13" height="13" rx="1" fill="url(#btn)" stroke="#333"/>
<path d="M1089.6 509.3 L1094.2 513 L1089.6 516.7" fill="none" stroke="#222" stroke-width="1.8"/>
<rect x="813.5" y="486.5" width="8" height="15" rx="2.5" fill="#fff" stroke="#333"/>
<line x1="816.5" x2="816.5" y1="489.5" y2="498.5" stroke="#222" stroke-width="1"/>
<line x1="818.5" x2="818.5" y1="489.5" y2="498.5" stroke="#222" stroke-width="1"/>
<rect x="1081.5" y="486.5" width="8" height="15" rx="2.5" fill="#fff" stroke="#333"/>
<line x1="1084.5" x2="1084.5" y1="489.5" y2="498.5" stroke="#222" stroke-width="1"/>
<line x1="1086.5" x2="1086.5" y1="489.5" y2="498.5" stroke="#222" stroke-width="1"/>
</svg>

<svg class="abs" style="left:14px;top:524px" width="19" height="11" viewBox="0 0 19 11"><g fill="none" stroke="#0000cc" stroke-width="1.1"><ellipse cx="5" cy="5.4" rx="3.7" ry="3.2"/><ellipse cx="13.2" cy="5.4" rx="3.7" ry="3.2"/><path d="M3.6 5.4H14.6" stroke-width="1.6"/></g></svg>
<div class="abs" id="linkview">Link to this view</div>
<div class="abs" id="discl">Disclaimer</div>
<div class="abs" id="sep2"></div>
<div class="abs" id="other">1 USD in other currencies:</div>

<div class="abs row c1" style="top:607px">USD &#8680; GBP</div><div class="abs row c2" style="top:607px">&pound; 0.6089</div><div class="abs row c3 up" style="top:607px">+0.00056 (0.091%)</div>
<div class="abs row c1" style="top:628px">USD &#8680; JPY</div><div class="abs row c2" style="top:628px">&yen; 104.2400</div><div class="abs row c3 dn" style="top:628px">-0.04000 (-0.038%)</div>
<div class="abs row c1" style="top:649px">USD &#8680; CHF</div><div class="abs row c2" style="top:649px">CHF 0.9073</div><div class="abs row c3 up" style="top:649px">+0.00450 (0.498%)</div>
<div class="abs row c1" style="top:670px">USD &#8680; AUD</div><div class="abs row c2" style="top:670px">A$ 1.1210</div><div class="abs row c3 up" style="top:670px">+0.00413 (0.370%)</div>
<div class="abs row c1" style="top:691px">USD &#8680; CAD</div><div class="abs row c2" style="top:691px">CA$ 1.0966</div><div class="abs row c3 up" style="top:691px">+0.00140 (0.128%)</div>
<div class="abs row c1" style="top:712px">USD &#8680; INR</div><div class="abs row c2" style="top:712px">Rs. 61.5400</div><div class="abs row c3 up" style="top:712px">+0.06000 (0.098%)</div>
</body>
</html>
